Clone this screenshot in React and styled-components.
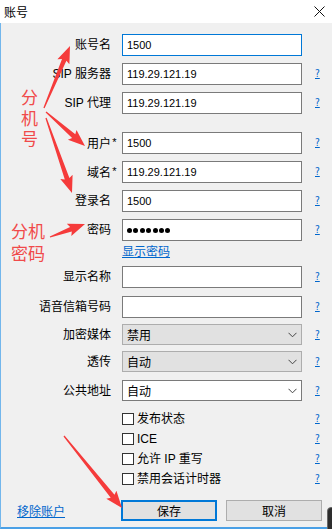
import React from "react";
import styled, { createGlobalStyle } from "styled-components";

const Global = createGlobalStyle`
  html, body { margin: 0; padding: 0; background: #f0f0f0; }
  body { font-family: "Liberation Sans", "Noto Sans CJK SC", sans-serif; }
  * { box-sizing: border-box; }
`;

const Window = styled.div`
  position: relative;
  width: 332px;
  height: 529px;
  overflow: hidden;
  background: #f0f0f0;
  display: flex;
  flex-direction: column;
  font-family: "Liberation Sans", "Noto Sans CJK SC", sans-serif;
  font-size: 12px;
  color: #000;
`;

const TitleBar = styled.div`
  height: 23px;
  flex-shrink: 0;
  background: #fff;
  display: flex;
  align-items: center;
  justify-content: space-between;
  padding: 0 7px 0 4px;
`;

const Title = styled.span`
  font-family: "Noto Sans CJK SC", sans-serif;
  font-size: 12px;
  line-height: 14px;
`;

const Body = styled.div`
  flex: 1;
  display: flex;
  flex-direction: column;
  border-left: 1px solid #72b6ec;
  border-bottom: 2px solid #4aa0e6;
  padding-top: 11px;
`;

const Row = styled.div`
  display: grid;
  grid-template-columns: 110px 180px 1fr;
  column-gap: 11px;
  align-items: center;
  height: ${(p) => p.$h || 22}px;
  margin-top: ${(p) => p.$mt || 0}px;
`;

const Label = styled.div`
  text-align: right;
  white-space: nowrap;
  font-family: "Liberation Sans", "Noto Sans CJK SC", sans-serif;
  font-size: 12px;
  line-height: 16px;
`;

const Req = styled.span`
  display: inline-block;
  margin-right: -7px;
  width: 7px;
  text-align: center;
  font-size: 11px;
  vertical-align: 2px;
`;

const TextInput = styled.input`
  width: 180px;
  height: 22px;
  margin: 0;
  padding: 0 0 0 4px;
  background: #fff;
  border: 1px solid ${(p) => (p.$focused ? "#0078d7" : "#7a7a7a")};
  outline: none;
  font-family: "Liberation Sans", "Noto Sans CJK SC", sans-serif;
  font-size: 11px;
  color: #000;
`;

const Dots = styled.div`
  width: 180px;
  height: 22px;
  padding: 0 0 0 4px;
  background: #fff;
  border: 1px solid #7a7a7a;
  display: flex;
  align-items: center;
  gap: 1.4px;
`;

const Dot = styled.span`
  width: 5px;
  height: 5px;
  border-radius: 50%;
  background: #000;
`;

const Combo = styled.div`
  width: 180px;
  height: 21px;
  display: flex;
  align-items: center;
  justify-content: space-between;
  padding: 0 4px 0 4px;
  background: ${(p) => (p.$editable ? "#fff" : "#e1e1e1")};
  border: 1px solid ${(p) => (p.$editable ? "#7a7a7a" : "#adadad")};
  font-family: "Noto Sans CJK SC", sans-serif;
  font-size: 12px;
  line-height: 14px;
`;

const Help = styled.a`
  padding-left: 2px;
  color: #0066cc;
  text-decoration: underline;
  font-family: "DejaVu Sans Condensed", "Liberation Sans", sans-serif;
  font-size: 10px;
  line-height: 12px;
  cursor: pointer;
`;

const Link = styled.a`
  color: #0066cc;
  text-decoration: underline;
  font-family: "Noto Sans CJK SC", sans-serif;
  font-size: 12px;
  line-height: 14px;
  white-space: nowrap;
  cursor: pointer;
`;

const Check = styled.label`
  display: flex;
  align-items: center;
  gap: 3px;
  white-space: nowrap;
  font-family: "Liberation Sans", "Noto Sans CJK SC", sans-serif;
  font-size: 12px;
  line-height: 14px;
`;

const Box = styled.span`
  width: 12px;
  height: 12px;
  border: 1px solid #333;
  background: #fff;
  flex-shrink: 0;
`;

const Footer = styled.div`
  display: flex;
  align-items: center;
  justify-content: space-between;
  margin-top: 15px;
  padding: 0 10px 0 16px;
`;

const Buttons = styled.div`
  display: flex;
  gap: 9px;
`;

const Button = styled.button`
  width: 96px;
  height: 21px;
  margin: 0;
  padding: 0;
  background: #e1e1e1;
  border: 1px solid ${(p) => (p.$primary ? "#0078d7" : "#adadad")};
  box-shadow: ${(p) => (p.$primary ? "inset 0 0 0 1px #0078d7" : "none")};
  font-family: "Noto Sans CJK SC", sans-serif;
  font-size: 12px;
  line-height: 14px;
  color: #000;
`;

const Overlay = styled.svg`
  position: absolute;
  left: 0;
  top: 0;
  width: 332px;
  height: 529px;
  pointer-events: none;
`;

const Note = styled.div`
  position: absolute;
  left: ${(p) => p.$x}px;
  top: ${(p) => p.$y}px;
  width: ${(p) => p.$w}px;
  color: #f04a4a;
  font-family: "Noto Sans CJK SC", sans-serif;
  font-size: 17px;
  line-height: ${(p) => p.$lh}px;
  word-break: break-all;
`;

const Corner = styled.div`
  position: absolute;
  left: 327px;
  top: 507px;
  width: 12px;
  height: 30px;
  background: #2e2e2e;
  border: 1px solid #6a6a6a;
  border-radius: 4px 0 0 0;
`;

function Chevron() {
  return (
    <svg width="9" height="6" viewBox="0 0 9 6">
      <path d="M0.5 0.8 L4.5 4.8 L8.5 0.8" fill="none" stroke="#444" strokeWidth="1" />
    </svg>
  );
}

function CloseIcon() {
  return (
    <svg width="11" height="11" viewBox="0 0 11 11">
      <path d="M0.5 0.5 L10.5 10.5 M10.5 0.5 L0.5 10.5" stroke="#111" strokeWidth="1" />
    </svg>
  );
}

function arrowPoints(x1, y1, x2, y2) {
  const dx = x2 - x1;
  const dy = y2 - y1;
  const L = Math.hypot(dx, dy);
  const ux = dx / L;
  const uy = dy / L;
  const nx = -uy;
  const ny = ux;
  const h = 15;
  const w = 6.5;
  const t0 = 0.6;
  const t1 = 2.4;
  const bx = x2 - ux * h;
  const by = y2 - uy * h;
  const wx = bx - ux * 2;
  const wy = by - uy * 2;
  const p = [
    [x1 + nx * t0, y1 + ny * t0],
    [bx + nx * t1, by + ny * t1],
    [wx + nx * w, wy + ny * w],
    [x2, y2],
    [wx - nx * w, wy - ny * w],
    [bx - nx * t1, by - ny * t1],
    [x1 - nx * t0, y1 - ny * t0],
  ];
  return p.map((q) => q[0].toFixed(1) + "," + q[1].toFixed(1)).join(" ");
}

const arrows = [
  [44, 108, 70, 46],
  [46, 112, 85, 146],
  [46, 118, 72, 193],
  [50, 237, 85, 224],
  [64, 436, 122, 508],
];

function Field({ label, req, value, focused, help = true, mt }) {
  return (
    <Row $mt={mt}>
      <Label>
        {label}
        {req && <Req>*</Req>}
      </Label>
      <TextInput readOnly value={value} $focused={focused} />
      {help ? <Help>?</Help> : <span />}
    </Row>
  );
}

function Select({ label, value, editable, mt }) {
  return (
    <Row $mt={mt} $h={21}>
      <Label>{label}</Label>
      <Combo $editable={editable}>
        <span>{value}</span>
        <Chevron />
      </Combo>
      <Help>?</Help>
    </Row>
  );
}

function CheckRow({ text, mt }) {
  return (
    <Row $mt={mt} $h={13}>
      <span />
      <Check>
        <Box />
        {text}
      </Check>
      <Help>?</Help>
    </Row>
  );
}

export default function App() {
  return (
    <Window>
      <Global />
      <TitleBar>
        <Title>账号</Title>
        <CloseIcon />
      </TitleBar>
      <Body>
        <Field label="账号名" value="1500" focused help={false} />
        <Field label="SIP 服务器" value="119.29.121.19" mt={7} />
        <Field label="SIP 代理" value="119.29.121.19" mt={7} />
        <Field label="用户" req value="1500" mt={18} />
        <Field label="域名" req value="119.29.121.19" mt={7} />
        <Field label="登录名" value="1500" mt={7} />
        <Row $mt={7}>
          <Label>密码</Label>
          <Dots>
            {Array.from({ length: 7 }).map((_, i) => (
              <Dot key={i} />
            ))}
          </Dots>
          <Help>?</Help>
        </Row>
        <Row $mt={2} $h={16}>
          <span />
          <Link>显示密码</Link>
          <span />
        </Row>
        <Field label="显示名称" value="" mt={7} />
        <Field label="语音信箱号码" value="" mt={8} />
        <Select label="加密媒体" value="禁用" mt={6} />
        <Select label="透传" value="自动" mt={6} />
        <Select label="公共地址" value="自动" editable mt={8} />
        <CheckRow text="发布状态" mt={11} />
        <CheckRow text="ICE" mt={7} />
        <CheckRow text="允许 IP 重写" mt={7} />
        <CheckRow text="禁用会话计时器" mt={7} />
        <Footer>
          <Link>移除账户</Link>
          <Buttons>
            <Button $primary>保存</Button>
            <Button>取消</Button>
          </Buttons>
        </Footer>
      </Body>
      <Corner />
      <Overlay viewBox="0 0 332 529">
        {arrows.map((a, i) => (
          <polygon key={i} points={arrowPoints(...a)} fill="#f53b3b" />
        ))}
      </Overlay>
      <Note $x={21} $y={87} $w={19} $lh={20.5}>分机号</Note>
      <Note $x={11} $y={220} $w={36} $lh={22}>分机密码</Note>
    </Window>
  );
}
